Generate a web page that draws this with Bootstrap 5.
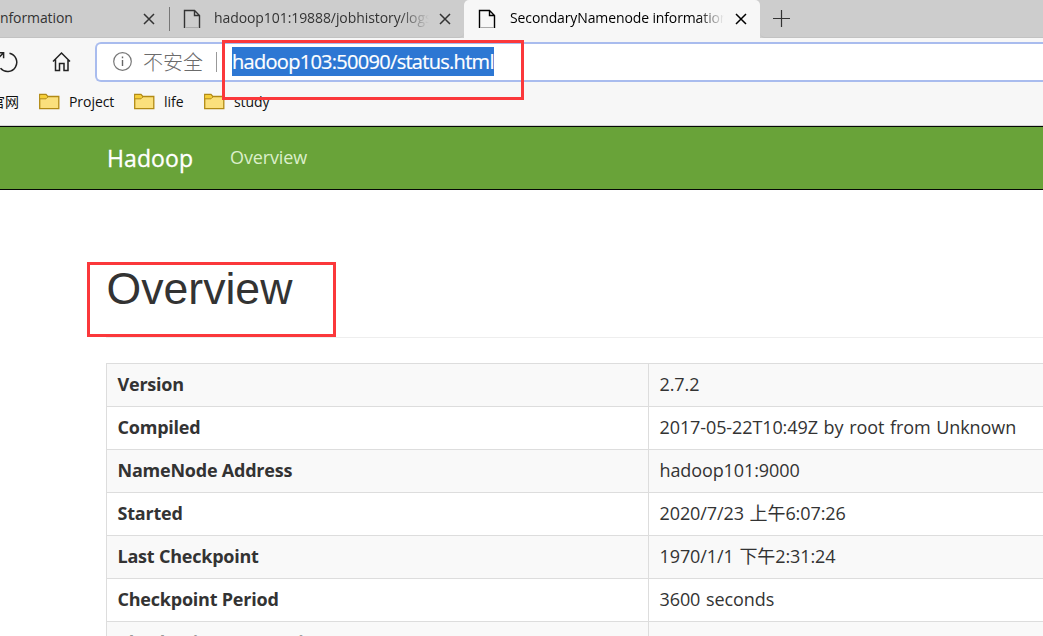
<!DOCTYPE html>
<html lang="zh-CN">
<head>
<meta charset="utf-8">
<meta name="viewport" content="width=device-width, initial-scale=1">
<title>SecondaryNamenode information</title>
<link href="https://cdn.jsdelivr.net/npm/bootstrap@5.3.0/dist/css/bootstrap.min.css" rel="stylesheet">
<style>
html{overflow:hidden}
body{width:1043px;height:636px;overflow:hidden;background:#fff;color:#333;font-family:"Open Sans","Noto Sans CJK SC",sans-serif}
svg{display:block;flex:none}
.tabstrip{height:38px;background:#cdcdcd;font-size:14px;line-height:34px;white-space:nowrap}
.tabstrip .ttl{margin-top:-2px}
.tab-side{border-bottom:1px solid #c2c2c2;color:#333}
.tab-first{width:169px}
.tab-first .ttl{width:143px;letter-spacing:-.1px}
.tab-second{width:295px;padding-left:14px;border-bottom-right-radius:5px}
.tab-second::before{content:"";position:absolute;left:0;top:7px;width:1px;height:24px;background:#777}
.tab-second .ttl{width:215px;margin-left:13px;letter-spacing:-.08px;-webkit-mask-image:linear-gradient(90deg,#000 86%,transparent);mask-image:linear-gradient(90deg,#000 86%,transparent)}
.tab-on{width:296px;padding-left:14px;background:#f7f7f7;color:#000;border-radius:5px 5px 0 0}
.tab-on .ttl{width:214px;margin-left:14px;letter-spacing:-.12px;-webkit-mask-image:linear-gradient(90deg,#000 88%,transparent);mask-image:linear-gradient(90deg,#000 88%,transparent)}
.ttl{overflow:hidden}
.tab-new{padding-left:13px;border-bottom-left-radius:5px}
.toolbar{height:47px;background:#f7f7f7;padding-top:4px}
.address{width:948px;height:40px;margin-left:23px;border:2px solid #a9bcee;border-right:0;border-radius:6px 0 0 6px;background:#fff;padding-left:16px}
.insecure{font-size:20px;line-height:36px;color:#6b6b6b;font-weight:300;margin-left:10px;font-family:"Noto Sans CJK SC",sans-serif}
.sep{width:1px;height:20px;background:#999;margin-left:13px}
.url{height:29px;line-height:30px;margin:-1px 0 0 15px;width:262px;background:#2d77d3;color:#fff;font-size:20px;letter-spacing:-.71px;white-space:nowrap;-webkit-text-stroke:.2px #fff}
.bookmarks{height:41px;background:#f7f7f7;font-size:14px;color:#111;border-bottom:1px solid #d4d4d4;white-space:nowrap;padding-bottom:8px}
.bookmarks .site{width:39px;margin-left:0;text-indent:-9px;overflow:hidden}
.folder{margin-left:9px;letter-spacing:-.05px}
.bm-project{width:65px}
.bm-life{width:40px}
.hadoop-bar{height:64px;background:#69a339;border:solid #050805;border-width:1px 0;padding:0 0 0 107px}
.hadoop-bar .navbar-brand{font-size:23px;color:#fff;padding:0;margin:0;width:123px;line-height:62px;letter-spacing:.1px;-webkit-text-stroke:.3px #fff}
.hadoop-bar .navbar-nav{margin-left:-8px}
.hadoop-bar .nav-link{font-size:18px;color:#dcefcb;padding:0 0 2px 8px;line-height:60px;letter-spacing:-.12px}
.page{padding-left:106px;width:1043px;overflow:hidden}
.page-header{height:148px;padding-top:74px;border-bottom:1px solid #eee;margin-bottom:25px}
.page-header h1{font:400 44.6px/50px "Liberation Sans",sans-serif;margin:0 0 0 .5px}
.info{width:1085px;table-layout:fixed;font-size:18px;color:#333;border-collapse:collapse;margin:0}
.info th,.info td{height:43px;padding:0 10px 2px;border:1px solid #ddd!important;vertical-align:middle;line-height:40px;box-shadow:none!important;color:#333}
.info th{width:542px;letter-spacing:-.22px;padding-left:10.5px}
.info td{letter-spacing:-.1px;word-spacing:1.2px;padding-left:10.5px}
.info tr:nth-child(odd)>*{background:#f9f9f9}
.info tr:last-child th{color:#999}
.callout{position:absolute;border:3px solid #fb383b;pointer-events:none}
.callout-url{left:222px;top:40px;width:302px;height:60px}
.callout-title{left:87px;top:262px;width:249px;height:75px}
</style>
</head>
<body class="position-relative">
<svg width="0" height="0" class="position-absolute">
<symbol id="page" viewBox="0 0 18 20"><path d="M1.500 19V1.500h10l5 5V19M11.500 1.500v5h5" fill="none" stroke="currentColor" stroke-width="1.400"/><path d="M2 18.500h14" stroke="#aaa"/></symbol>
<symbol id="close" viewBox="0 0 12 12"><path d="M1 1l10 10M11 1L1 11" stroke="currentColor" stroke-width="1.500"/></symbol>
<symbol id="folder" viewBox="0 0 21 17"><path d="M.7 15.700V1.500h6.300l1.800 2h11v12.200z" fill="#fbe07c" stroke="#b28a14" stroke-width="1.300"/><path d="M1.400 2.200h5.300l1.600 1.700-1.500 1.500H1.400z" fill="#f7cf33"/><path d="M1 5.800h6l2-2" fill="none" stroke="#b28a14"/></symbol>
</svg>

<div class="tabstrip d-flex">
  <div class="tab-side tab-first d-flex align-items-center"><span class="ttl">nformation</span><svg width="12" height="12"><use href="#close"/></svg></div>
  <div class="tab-side tab-second position-relative d-flex align-items-center"><svg width="18" height="20"><use href="#page"/></svg><span class="ttl">hadoop101:19888/jobhistory/logs</span><svg width="12" height="12" style="margin-left:10px"><use href="#close"/></svg></div>
  <div class="tab-on d-flex align-items-center"><svg width="18" height="20"><use href="#page"/></svg><span class="ttl">SecondaryNamenode information</span><svg width="12" height="12" style="margin-left:11px"><use href="#close"/></svg></div>
  <div class="tab-side tab-new flex-grow-1 d-flex align-items-center"><svg width="17" height="17" viewBox="0 0 17 17"><path d="M8.500 0v17M0 8.500h17" stroke="#333" stroke-width="1.200"/></svg></div>
</div>

<div class="toolbar d-flex align-items-start">
  <svg width="52" height="40" viewBox="0 0 52 40"><path d="M9.500 11.300A9.200 9.200 0 1 1 .5 26.200M-2 10.800H3.600v5.400M3.600 10.800L-1 15.400" fill="none" stroke="#222" stroke-width="1.500"/></svg>
  <svg width="20" height="40" viewBox="0 0 20 40"><path d="M1 19.500L9.500 11l8.500 8.500M3.500 17.500v11h4v-7h4.500v7h4v-11" fill="none" stroke="#222" stroke-width="1.500"/></svg>
  <div class="address d-flex align-items-center flex-shrink-0">
    <svg width="20" height="20" viewBox="0 0 20 20"><circle cx="9.500" cy="9.500" r="8.800" fill="none" stroke="#777" stroke-width="1.200"/><path d="M9.500 8v6M9.500 4.500v1.800" stroke="#666" stroke-width="1.400"/></svg>
    <span class="insecure">不安全</span><span class="sep"></span><span class="url">hadoop103:50090/status.html</span>
  </div>
</div>
<div class="bookmarks d-flex align-items-center">
  <span class="site">官网</span>
  <svg width="21" height="17"><use href="#folder"/></svg><span class="folder bm-project">Project</span>
  <svg width="21" height="17"><use href="#folder"/></svg><span class="folder bm-life">life</span>
  <svg width="21" height="17"><use href="#folder"/></svg><span class="folder">study</span>
</div>

<nav class="hadoop-bar navbar navbar-expand justify-content-start">
  <a class="navbar-brand" href="#">Hadoop</a>
  <div class="navbar-nav"><a class="nav-link" href="#">Overview</a></div>
</nav>
<main class="page">
  <div class="page-header"><h1>Overview</h1></div>
  <table class="info table table-bordered">
    <tbody>
    <tr><th>Version</th><td>2.7.2</td></tr>
    <tr><th>Compiled</th><td>2017-05-22T10:49Z by root from Unknown</td></tr>
    <tr><th>NameNode Address</th><td>hadoop101:9000</td></tr>
    <tr><th>Started</th><td>2020/7/23 上午6:07:26</td></tr>
    <tr><th>Last Checkpoint</th><td>1970/1/1 下午2:31:24</td></tr>
    <tr><th>Checkpoint Period</th><td>3600 seconds</td></tr>
    <tr><th>Checkpoint Transactions</th><td></td></tr>
    </tbody>
  </table>
</main>
<div class="callout callout-url"></div>
<div class="callout callout-title"></div>
<script src="https://cdn.jsdelivr.net/npm/bootstrap@5.3.0/dist/js/bootstrap.bundle.min.js"></script>
</body>
</html>
